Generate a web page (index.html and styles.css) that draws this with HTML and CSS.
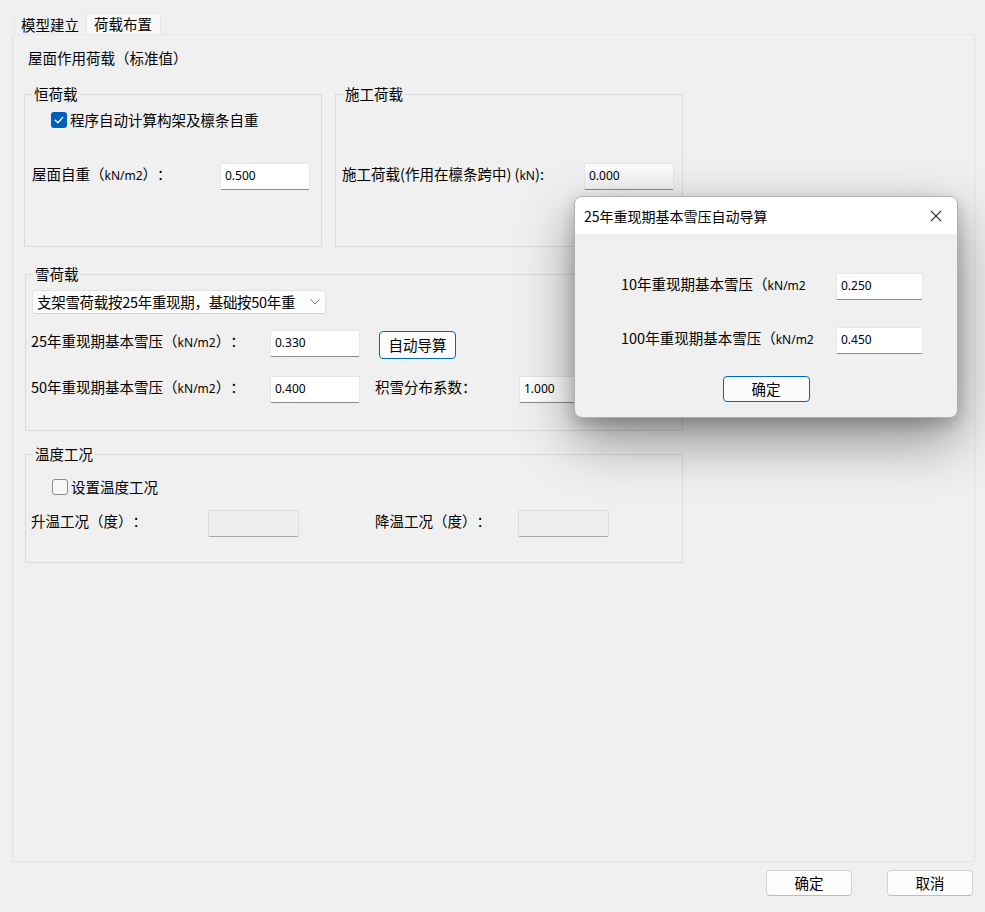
FILE: index.html
```html
<!DOCTYPE html>
<html lang="zh-CN">
<head>
<meta charset="utf-8">
<title>荷载布置</title>
<link rel="stylesheet" href="styles.css">
</head>
<body>
<div class="tabs">
  <div class="tab">模型建立</div>
  <div class="tab active">荷载布置</div>
</div>
<div class="panel">
  <div class="heading">屋面作用荷载（标准值）</div>
  <div class="top-groups">
    <div class="group g-dead">
      <span class="legend">恒荷载</span>
      <div class="check-row">
        <span class="cb checked"><svg width="16" height="16" viewBox="0 0 16 16"><path d="M4.2 8.3 L6.9 10.8 L11.8 5.4" fill="none" stroke="#fff" stroke-width="1.4" stroke-linecap="round" stroke-linejoin="round"/></svg></span>
        <span>程序自动计算构架及檩条自重</span>
      </div>
      <div class="field-row r-dead">
        <span class="label w188">屋面自重（<span class="l">kN/m2</span>）：</span>
        <div class="input">0.500</div>
      </div>
    </div>
    <div class="group g-cons">
      <span class="legend">施工荷载</span>
      <div class="field-row r-cons">
        <span class="label w242">施工荷载(作用在檩条跨中) (<span class="l">kN</span>):</span>
        <div class="input shaded">0.000</div>
      </div>
    </div>
  </div>

  <div class="group g-snow">
    <span class="legend">雪荷载</span>
    <div class="select">
      <span class="select-text">支架雪荷载按25年重现期，基础按50年重</span>
      <svg class="chev" width="10" height="6" viewBox="0 0 10 6"><path d="M0.5 0.5 L5 5 L9.5 0.5" fill="none" stroke="#7a7a7a" stroke-width="1"/></svg>
    </div>
    <div class="field-row r-snow1">
      <span class="label w239">25年重现期基本雪压（<span class="l">kN/m2</span>）：</span>
      <div class="input">0.330</div>
      <button class="btn primary auto">自动导算</button>
    </div>
    <div class="field-row r-snow2">
      <span class="label w239">50年重现期基本雪压（<span class="l">kN/m2</span>）：</span>
      <div class="input">0.400</div>
      <span class="label w144 ml15">积雪分布系数：</span>
      <div class="input">1.000</div>
    </div>
  </div>

  <div class="group g-temp">
    <span class="legend">温度工况</span>
    <div class="check-row">
      <span class="cb"></span>
      <span>设置温度工况</span>
    </div>
    <div class="field-row r-temp">
      <span class="label w177">升温工况（度）：</span>
      <div class="input disabled"></div>
      <span class="label w143 ml76">降温工况（度）：</span>
      <div class="input disabled"></div>
    </div>
  </div>
</div>
<div class="footer">
  <button class="btn">确定</button>
  <button class="btn">取消</button>
</div>

<div class="dialog">
  <div class="dlg-title">
    <span>25年重现期基本雪压自动导算</span>
    <svg class="close" width="12" height="12" viewBox="0 0 12 12"><path d="M0.8 0.8 L11.2 11.2 M11.2 0.8 L0.8 11.2" stroke="#1a1a1a" stroke-width="1.1"/></svg>
  </div>
  <div class="dlg-body">
    <div class="dlg-row first">
      <span class="label w215">10年重现期基本雪压（<span class="l">kN/m2</span></span>
      <div class="input dlg-input">0.250</div>
    </div>
    <div class="dlg-row second">
      <span class="label w215">100年重现期基本雪压（<span class="l">kN/m2</span></span>
      <div class="input dlg-input">0.450</div>
    </div>
    <div class="dlg-actions">
      <button class="btn primary ok">确定</button>
    </div>
  </div>
</div>
</body>
</html>
```

FILE: styles.css
```css
* { box-sizing: border-box; }

html, body {
  margin: 0;
  padding: 0;
}

body {
  width: 985px;
  height: 912px;
  overflow: hidden;
  position: relative;
  background: #f0f0f0;
  color: #000;
  font-family: "Noto Sans CJK SC", "Noto Sans", sans-serif;
  font-size: 14.5px;
  line-height: 20px;
  text-spacing-trim: space-all;
}

.l {
  font-family: "Noto Sans", sans-serif;
  font-size: 12px;
}

/* tabs */
.tabs {
  display: flex;
  align-items: flex-end;
  height: 34px;
  padding-left: 14px;
}

.tab {
  height: 18px;
  line-height: 17px;
  padding: 0 4px 0 6px;
  border-left: 1px solid #e6e6e6;
  white-space: nowrap;
}

.tab.active {
  height: 21px;
  line-height: 20px;
  margin-left: 3px;
  padding: 0 8px 0 7px;
  background: #f9f9f9;
  border: 1px solid #e6e6e6;
  border-bottom: none;
}

/* main panel */
.panel {
  margin-left: 12px;
  width: 963px;
  height: 828px;
  border: 1px solid #e2e2e2;
  border-top-color: #e8e8e8;
}

.heading {
  margin: 13px 0 0 15px;
  line-height: 20px;
}

.top-groups {
  display: flex;
  gap: 13px;
  margin: 26px 0 0 11px;
}

.group {
  position: relative;
  border: 1px solid #dadada;
}

.legend {
  position: absolute;
  top: -11px;
  left: 7px;
  padding: 0 2px;
  background: #f0f0f0;
  line-height: 20px;
  white-space: nowrap;
}

.g-dead { width: 298px; height: 153px; }
.g-cons { width: 348px; height: 153px; }

.g-snow {
  margin: 27px 0 0 12px;
  width: 658px;
  height: 157px;
}

.g-temp {
  margin: 23px 0 0 12px;
  width: 658px;
  height: 109px;
}

.check-row {
  display: flex;
  align-items: center;
  height: 20px;
  padding-left: 26px;
  white-space: nowrap;
}

.g-dead .check-row { margin-top: 15px; }
.g-temp .check-row { margin-top: 22px; }

.cb {
  width: 16px;
  height: 16px;
  margin-right: 3px;
  border: 1px solid #8b8b8b;
  border-radius: 3px;
  background: #f7f7f7;
  flex: none;
}

.cb.checked {
  border: none;
  background: #005fb8;
}

.cb svg { display: block; }

.field-row {
  display: flex;
  align-items: flex-start;
  white-space: nowrap;
}

.label {
  flex: none;
  line-height: 22px;
  white-space: nowrap;
}

.w188 { width: 188px; }
.w242 { width: 242px; }
.w239 { width: 239px; }
.w144 { width: 144px; }
.w177 { width: 177px; }
.w143 { width: 143px; }
.w215 { width: 215px; }
.ml15 { margin-left: 15px; }
.ml76 { margin-left: 76px; }

.r-dead { margin-top: 33px; padding-left: 7px; }
.r-cons { margin-top: 68px; padding-left: 6px; }
.r-snow1 { margin-top: 16px; padding-left: 5px; }
.r-snow2 { margin-top: 17px; padding-left: 5px; }
.r-temp { margin-top: 13px; padding-left: 5px; }

.input {
  flex: none;
  width: 90px;
  height: 27px;
  padding: 3px 4px 0;
  background: #fff;
  border: 1px solid #e6e6e6;
  border-bottom: 1px solid #8a8a8a;
  border-radius: 2px;
  font-family: "Noto Sans", sans-serif;
  font-size: 12px;
  line-height: 17px;
}

.input.shaded {
  background: linear-gradient(to bottom, #fdfdfd, #f3f3f3);
}

.input.disabled {
  width: 91px;
  background: #eeeeee;
  border: 1px solid #dcdcdc;
  border-bottom: 1px solid #a9a9a9;
}

/* select */
.select {
  display: flex;
  align-items: center;
  justify-content: space-between;
  margin: 15px 0 0 6px;
  width: 294px;
  height: 24px;
  padding: 0 5px 0 4px;
  background: #fdfdfd;
  border: 1px solid #e3e3e3;
  border-bottom-color: #cfcfcf;
  border-radius: 3px;
  white-space: nowrap;
  overflow: hidden;
}

.select-text { line-height: 22px; letter-spacing: -0.3px; }
.chev { flex: none; margin-left: 6px; }

/* buttons */
.btn {
  font-family: "Noto Sans CJK SC", "Noto Sans", sans-serif;
  font-size: 14.5px;
  line-height: 20px;
  color: #000;
  background: #fdfdfd;
  border: 1px solid #d2d2d2;
  border-bottom-color: #bdbdbd;
  border-radius: 4px;
  padding: 0;
  height: 26px;
}

.btn.primary {
  border: 1px solid #0067c0;
  background: #fbfbfb;
}

.auto {
  width: 77px;
  height: 28px;
  margin: 1px 0 0 19px;
}

.footer {
  display: flex;
  justify-content: flex-end;
  gap: 35px;
  margin-top: 8px;
  padding-right: 12px;
}

.footer .btn { width: 86px; }

/* dialog (overlay) */
.dialog {
  position: absolute;
  left: 574px;
  top: 196px;
  width: 384px;
  height: 222px;
  background: #f0f0f0;
  border: 1px solid #b0b0b0;
  border-radius: 8px;
  overflow: hidden;
  box-shadow: 0 22px 55px rgba(0, 0, 0, 0.42), 0 6px 16px rgba(0, 0, 0, 0.2);
}

.dlg-title {
  display: flex;
  align-items: center;
  justify-content: space-between;
  height: 37px;
  padding: 0 15px 0 9px;
  background: #fff;
  font-size: 14px;
}

.close { display: block; }

.dlg-body {
  padding-left: 46px;
}

.dlg-row {
  display: flex;
  align-items: flex-start;
  white-space: nowrap;
}

.dlg-row.first { margin-top: 39px; }
.dlg-row.second { margin-top: 27px; }

.dlg-input { width: 87px; }

.dlg-actions {
  display: flex;
  justify-content: center;
  margin: 22px 0 0 -46px;
}

.ok { width: 87px; height: 26px; }
```
